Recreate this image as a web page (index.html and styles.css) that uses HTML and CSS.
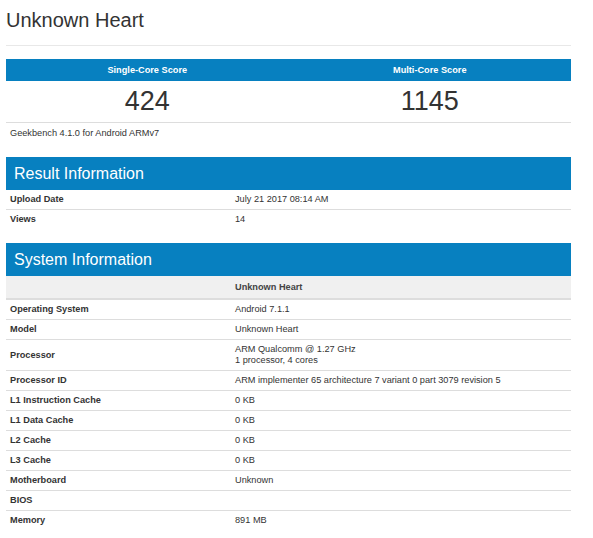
FILE: index.html
```html
<!DOCTYPE html>
<html>
<head>
<meta charset="utf-8">
<link rel="stylesheet" href="styles.css">
</head>
<body>
<div class="page">
  <h1 class="title">Unknown Heart</h1>
  <div class="rule"></div>

  <table class="scores">
    <thead>
      <tr><th>Single-Core Score</th><th>Multi-Core Score</th></tr>
    </thead>
    <tbody>
      <tr><td>424</td><td>1145</td></tr>
    </tbody>
  </table>
  <div class="version">Geekbench 4.1.0 for Android ARMv7</div>

  <h2 class="section">Result Information</h2>
  <table class="info">
    <tr><td class="k">Upload Date</td><td class="v">July 21 2017 08:14 AM</td></tr>
    <tr class="last"><td class="k">Views</td><td class="v">14</td></tr>
  </table>

  <h2 class="section">System Information</h2>
  <table class="info">
    <tr class="head"><td class="k"></td><td class="v">Unknown Heart</td></tr>
    <tr><td class="k">Operating System</td><td class="v">Android 7.1.1</td></tr>
    <tr><td class="k">Model</td><td class="v">Unknown Heart</td></tr>
    <tr><td class="k">Processor</td><td class="v">ARM Qualcomm @ 1.27 GHz<br>1 processor, 4 cores</td></tr>
    <tr><td class="k">Processor ID</td><td class="v">ARM implementer 65 architecture 7 variant 0 part 3079 revision 5</td></tr>
    <tr><td class="k">L1 Instruction Cache</td><td class="v">0 KB</td></tr>
    <tr><td class="k">L1 Data Cache</td><td class="v">0 KB</td></tr>
    <tr><td class="k">L2 Cache</td><td class="v">0 KB</td></tr>
    <tr><td class="k">L3 Cache</td><td class="v">0 KB</td></tr>
    <tr><td class="k">Motherboard</td><td class="v">Unknown</td></tr>
    <tr><td class="k">BIOS</td><td class="v"></td></tr>
    <tr class="last"><td class="k">Memory</td><td class="v">891 MB</td></tr>
  </table>
</div>
</body>
</html>
```

FILE: styles.css
```css
html, body {
  margin: 0;
  padding: 0;
  background: #fff;
}
body {
  font-family: "Liberation Sans", Arial, sans-serif;
  color: #333;
}
.page {
  width: 565px;
  margin-left: 6px;
  padding-top: 8px;
}
.title {
  margin: 0;
  font-size: 20px;
  font-weight: normal;
  line-height: 24px;
  color: #333;
}
.rule {
  height: 1px;
  background: #e8e8e8;
  margin-top: 13px;
  margin-bottom: 13px;
}
.scores {
  width: 100%;
  border-collapse: collapse;
  table-layout: fixed;
}
.scores th {
  background: #0780c0;
  color: #fff;
  font-size: 9.2px;
  font-weight: bold;
  height: 22px;
  padding: 0;
  text-align: center;
  vertical-align: middle;
}
.scores td {
  height: 41px;
  padding: 0;
  text-align: center;
  vertical-align: middle;
  font-size: 27px;
  color: #333;
  border-bottom: 1px solid #ddd;
}
.version {
  font-size: 9.2px;
  line-height: 11px;
  padding: 5px 4px 0;
  color: #333;
}
.section {
  margin: 18px 0 0;
  background: #0780c0;
  color: #fff;
  font-size: 16px;
  font-weight: normal;
  height: 33px;
  line-height: 33px;
  padding: 0 0 0 8px;
}
.info {
  width: 100%;
  border-collapse: collapse;
  table-layout: fixed;
  font-size: 9.2px;
  line-height: 11px;
}
.info td {
  padding: 4px 4px 4px;
  border-bottom: 1px solid #ddd;
  vertical-align: middle;
  height: 11px;
}
.info td.k {
  width: 217px;
  font-weight: bold;
  color: #333;
}
.info td.v {
  color: #333;
}
.info tr.last td {
  border-bottom: none;
}
.info tr.head td {
  background: #f0f0f0;
  border-bottom: 2px solid #ddd;
  padding: 6px 4px 5px;
  font-weight: bold;
  color: #444;
}
.info + .section {
  margin-top: 14px;
}
```
